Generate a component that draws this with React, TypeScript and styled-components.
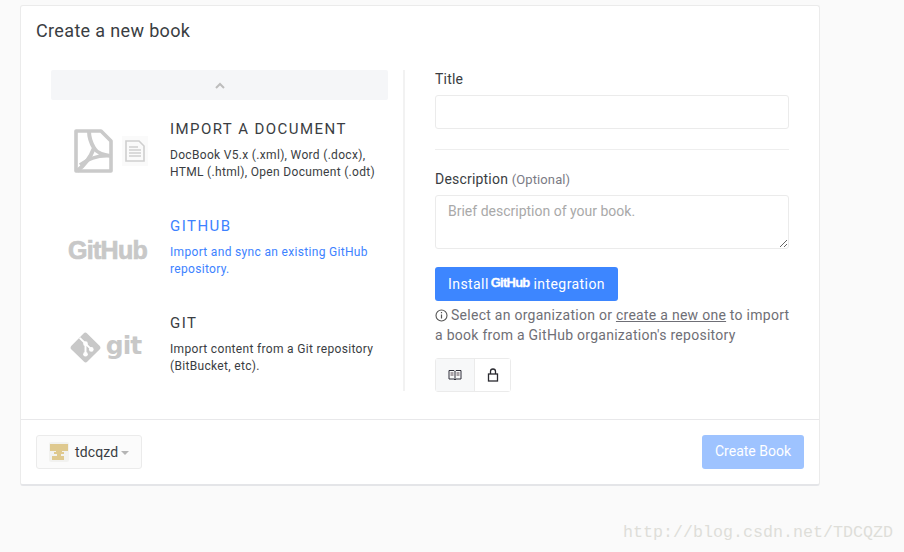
import React from "react";
import styled, { createGlobalStyle } from "styled-components";

const Global = createGlobalStyle`
  html, body { margin: 0; padding: 0; background: #fafafa; }
  body { font-family: Roboto, "Liberation Sans", sans-serif; color: #383838; }
`;
const Page = styled.div`
  position: relative;
  width: 904px;
  height: 552px;
  padding: 5px 0 0 20px;
  box-sizing: border-box;
  overflow: hidden;
`;
const Card = styled.div`
  width: 800px;
  height: 481px;
  box-sizing: border-box;
  background: #fff;
  border-radius: 3px;
  border: 1px solid #ebebeb;
  border-bottom: 2px solid #e4e5e8;
  display: flex;
  flex-direction: column;
`;
const Title = styled.h1`
  margin: 0;
  padding: 14px 15px 0;
  height: 64px;
  box-sizing: border-box;
  font-size: 18px;
  line-height: 22px;
  font-weight: 400;
  letter-spacing: 0.35px;
  color: #3a3d42;
`;
const Body = styled.div`
  height: 349px;
  box-sizing: border-box;
  display: flex;
  padding-left: 30px;
`;
const Left = styled.div`
  width: 337px;
  height: 321px;
`;
const ScrollUp = styled.div`
  height: 30px;
  background: #f5f6f8;
  border-radius: 2px;
  display: flex;
  align-items: center;
  justify-content: center;
`;
const Options = styled.div`
  display: flex;
  flex-direction: column;
`;
const Option = styled.div`
  height: 97px;
  display: flex;
  padding-top: 20px;
  box-sizing: border-box;
`;
const Logo = styled.div<{ $right?: number; $up?: number; $gap?: number }>`
  width: 119px;
  flex: none;
  display: flex;
  align-items: center;
  justify-content: center;
  box-sizing: border-box;
  height: 60px;
  margin-top: ${(p) => 3 - (p.$up ?? 0)}px;
  padding-right: ${(p) => p.$right ?? 0}px;
  gap: ${(p) => p.$gap ?? 5}px;
`;
const GithubWord = styled.span`
  font-family: "Liberation Sans", sans-serif;
  font-weight: 700;
  font-size: 25px;
  letter-spacing: -0.7px;
  color: #c8c8c8;
  -webkit-text-stroke: 0.7px #c8c8c8;
`;
const GitWord = styled.span`
  font-family: "DejaVu Sans", sans-serif;
  font-weight: 700;
  font-size: 25px;
  letter-spacing: -1px;
  color: #c8c8c8;
  line-height: 1;
  margin-top: -4px;
`;
const OptionText = styled.div<{ $active?: boolean }>`
  flex: 1;
  color: ${(p) => (p.$active ? "#3d82ff" : "#3a3d42")};
`;
const OptionTitle = styled.div`
  font-size: 15px;
  line-height: 18px;
  letter-spacing: 1.45px;
  margin-top: 0;
`;
const OptionDesc = styled.div`
  font-size: 12px;
  line-height: 17px;
  letter-spacing: 0.32px;
  margin-top: 9px;
`;
const Divider = styled.div`
  width: 2px;
  height: 321px;
  margin-left: 15px;
  background: #f2f2f2;
`;
const Right = styled.div`
  width: 354px;
  margin-left: 30px;
`;
const Label = styled.div`
  font-size: 14px;
  line-height: 18px;
  letter-spacing: 0.2px;
  color: #3a3d42;
`;
const Optional = styled.span`
  font-size: 13px;
  color: #7b7b85;
  letter-spacing: 0.1px;
`;
const TitleInput = styled.input`
  display: block;
  width: 100%;
  height: 34px;
  box-sizing: border-box;
  margin-top: 7px;
  border: 1px solid #ebebeb;
  border-radius: 3px;
  background: #fff;
  outline: none;
`;
const Rule = styled.div`
  height: 1px;
  background: #eeeeee;
  margin: 20px 0 20px;
`;
const Area = styled.textarea`
  display: block;
  width: 100%;
  height: 54px;
  box-sizing: border-box;
  margin-top: 6px;
  padding: 6px 12px;
  border: 1px solid #ebebeb;
  border-radius: 3px;
  font-family: Roboto, sans-serif;
  font-size: 14px;
  line-height: 18px;
  outline: none;
  &::placeholder { color: #a9a9a9; opacity: 1; }
`;
const Install = styled.button`
  display: flex;
  align-items: center;
  width: 183px;
  height: 34px;
  margin-top: 18px;
  padding: 0 13px;
  box-sizing: border-box;
  border: none;
  border-radius: 3px;
  background: #3d86ff;
  color: #fff;
  font-family: Roboto, sans-serif;
  font-size: 14px;
  letter-spacing: 0.42px;
  white-space: pre;
`;
const InstallLogo = styled.span`
  font-family: "Liberation Sans", sans-serif;
  font-weight: 700;
  font-size: 13px;
  letter-spacing: -0.75px;
  margin: -3px 4px 0 2px;
  -webkit-text-stroke: 0.3px #fff;
`;
const Hint = styled.div`
  margin-top: 4px;
  font-size: 14px;
  line-height: 20px;
  letter-spacing: 0.27px;
  color: #6f6f76;
  white-space: nowrap;
`;
const HintLink = styled.span`
  text-decoration: underline;
`;
const InfoIcon = styled.svg`
  vertical-align: -2px;
  margin-right: 3px;
`;
const Group = styled.div`
  display: inline-flex;
  margin-top: 13px;
  height: 34px;
  box-sizing: border-box;
  border: 1px solid #ebebeb;
  border-radius: 3px;
`;
const GroupBtn = styled.div<{ $on?: boolean }>`
  width: ${(p) => (p.$on ? 39 : 35)}px;
  box-sizing: border-box;
  display: flex;
  align-items: center;
  justify-content: center;
  background: ${(p) => (p.$on ? "#f7f8f9" : "#fff")};
  border-right: ${(p) => (p.$on ? "1px solid #ebebeb" : "none")};
`;
const Footer = styled.div`
  flex: 1;
  border-top: 1px solid #e8e8ea;
  padding: 15px 15px 0;
  display: flex;
  justify-content: space-between;
  align-items: flex-start;
`;
const Owner = styled.div`
  height: 34px;
  width: 106px;
  box-sizing: border-box;
  border: 1px solid #ebebeb;
  border-radius: 3px;
  background: #fbfbfb;
  display: flex;
  align-items: center;
  padding-left: 12px;
  font-size: 14px;
  color: #3a3d42;
  letter-spacing: 0.15px;
`;
const Avatar = styled.svg`
  margin-right: 6px;
  border-radius: 2px;
`;
const Caret = styled.span`
  width: 0;
  height: 0;
  margin-left: 3px;
  margin-top: 2px;
  border-left: 4px solid transparent;
  border-right: 4px solid transparent;
  border-top: 4px solid #b5b5b5;
`;
const CreateBtn = styled.button`
  width: 102px;
  height: 34px;
  border: none;
  border-radius: 3px;
  background: #9ec3ff;
  color: #fff;
  font-family: Roboto, sans-serif;
  font-size: 14px;
  padding: 0 0 2px;
`;
const Watermark = styled.div`
  position: absolute;
  left: 623px;
  top: 524px;
  font-family: "Liberation Mono", monospace;
  font-size: 16.67px;
  line-height: 18px;
  color: #deded9;
  white-space: nowrap;
`;

const PdfIcon = () => (
  <svg width="39" height="44" viewBox="0 0 39 44" fill="none">
    <path d="M2 2h25l10 10v30H2z" stroke="#cacaca" strokeWidth="3.6" strokeLinejoin="round" />
    <path d="M15 2c0 7 2 12 5 17-3 8-8 16-17 23" stroke="#cacaca" strokeWidth="4" />
    <path d="M20 19c3 5 9 7 17 8-12-1-22 2-31 9" stroke="#cacaca" strokeWidth="3.6" />
  </svg>
);
const DocIcon = () => (
  <svg width="26" height="30" viewBox="0 0 26 30">
    <rect width="26" height="30" fill="#fafafa" />
    <path d="M4 5h13l5 5v15H4z" fill="none" stroke="#cfcfcf" strokeWidth="1.6" />
    <path d="M7 11h9M7 14h12M7 17h12M7 20h12" stroke="#cfcfcf" strokeWidth="1.4" />
  </svg>
);
const GitDiamond = () => (
  <svg width="31" height="31" viewBox="0 0 32 32">
    <path d="M14 1.5a2.6 2.6 0 0 1 3.7 0l12.8 12.8a2.6 2.6 0 0 1 0 3.7L18 30.5a2.6 2.6 0 0 1-3.7 0L1.5 18a2.6 2.6 0 0 1 0-3.7z" fill="#c8c8c8" />
    <path d="M10 6l6 6v10M16 12l6 6" stroke="#fff" strokeWidth="2" fill="none" />
    <circle cx="16" cy="12" r="2.4" fill="#fff" />
    <circle cx="16" cy="23" r="2.4" fill="#fff" />
    <circle cx="22" cy="18" r="2.4" fill="#fff" />
  </svg>
);

export default function App() {
  return (
    <Page>
      <Global />
      <Card>
        <Title>Create a new book</Title>
        <Body>
          <Left>
            <ScrollUp>
              <svg width="10" height="7" viewBox="0 0 10 7">
                <path d="M1 6l4-4 4 4" fill="none" stroke="#bdbdbd" strokeWidth="2" />
              </svg>
            </ScrollUp>
            <Options>
              <Option>
                <Logo $up={2} $gap={9}>
                  <PdfIcon />
                  <DocIcon />
                </Logo>
                <OptionText>
                  <OptionTitle>IMPORT A DOCUMENT</OptionTitle>
                  <OptionDesc>
                    DocBook V5.x (.xml), Word (.docx),
                    <br />
                    HTML (.html), Open Document (.odt)
                  </OptionDesc>
                </OptionText>
              </Option>
              <Option>
                <Logo $right={6}>
                  <GithubWord>GitHub</GithubWord>
                </Logo>
                <OptionText $active>
                  <OptionTitle>GITHUB</OptionTitle>
                  <OptionDesc>
                    Import and sync an existing GitHub
                    <br />
                    repository.
                  </OptionDesc>
                </OptionText>
              </Option>
              <Option>
                <Logo $right={10}>
                  <GitDiamond />
                  <GitWord>git</GitWord>
                </Logo>
                <OptionText>
                  <OptionTitle>GIT</OptionTitle>
                  <OptionDesc>
                    Import content from a Git repository
                    <br />
                    (BitBucket, etc).
                  </OptionDesc>
                </OptionText>
              </Option>
            </Options>
          </Left>
          <Divider />
          <Right>
            <Label>Title</Label>
            <TitleInput />
            <Rule />
            <Label>
              Description <Optional>(Optional)</Optional>
            </Label>
            <Area placeholder="Brief description of your book." />
            <Install>
              Install<InstallLogo>GitHub</InstallLogo>integration
            </Install>
            <Hint>
              <InfoIcon width="13" height="13" viewBox="0 0 13 13">
                <circle cx="6.5" cy="6.5" r="5.5" fill="none" stroke="#555" strokeWidth="1.1" />
                <path d="M6.5 5.5v4M6.5 3v1.3" stroke="#555" strokeWidth="1.2" />
              </InfoIcon>
              Select an organization or <HintLink>create a new one</HintLink> to import
              <br />
              a book from a GitHub organization's repository
            </Hint>
            <Group>
              <GroupBtn $on>
                <svg width="14" height="12" viewBox="0 0 14 12" fill="none">
                  <path d="M1 1.5h5l1 1 1-1h5v8.5H8l-1 1-1-1H1zM7 2.5v8" stroke="#2f2f3a" />
                  <path d="M2.5 4h3M2.5 6h3M8.5 4h3M8.5 6h3" stroke="#5a4a55" strokeWidth="1" />
                </svg>
              </GroupBtn>
              <GroupBtn>
                <svg width="12" height="14" viewBox="0 0 12 14" fill="none">
                  <rect x="1.5" y="6" width="9" height="7" stroke="#2a2a30" strokeWidth="1.3" />
                  <path d="M3.5 6V3.5a2.5 2.5 0 0 1 5 0V6" stroke="#2a2a30" strokeWidth="1.3" />
                </svg>
              </GroupBtn>
            </Group>
          </Right>
        </Body>
        <Footer>
          <Owner>
            <Avatar width="20" height="20" viewBox="0 0 20 20">
              <rect width="20" height="20" fill="#f2f2f0" />
              <path d="M1 2h18v7H1zM7 9h6v2H7zM5 10h10v2H5zM8 12h4v2H8zM3 14h12v4H3z" fill="#dfc98f" />
            </Avatar>
            tdcqzd
            <Caret />
          </Owner>
          <CreateBtn>Create Book</CreateBtn>
        </Footer>
      </Card>
      <Watermark>http://blog.csdn.net/TDCQZD</Watermark>
    </Page>
  );
}
